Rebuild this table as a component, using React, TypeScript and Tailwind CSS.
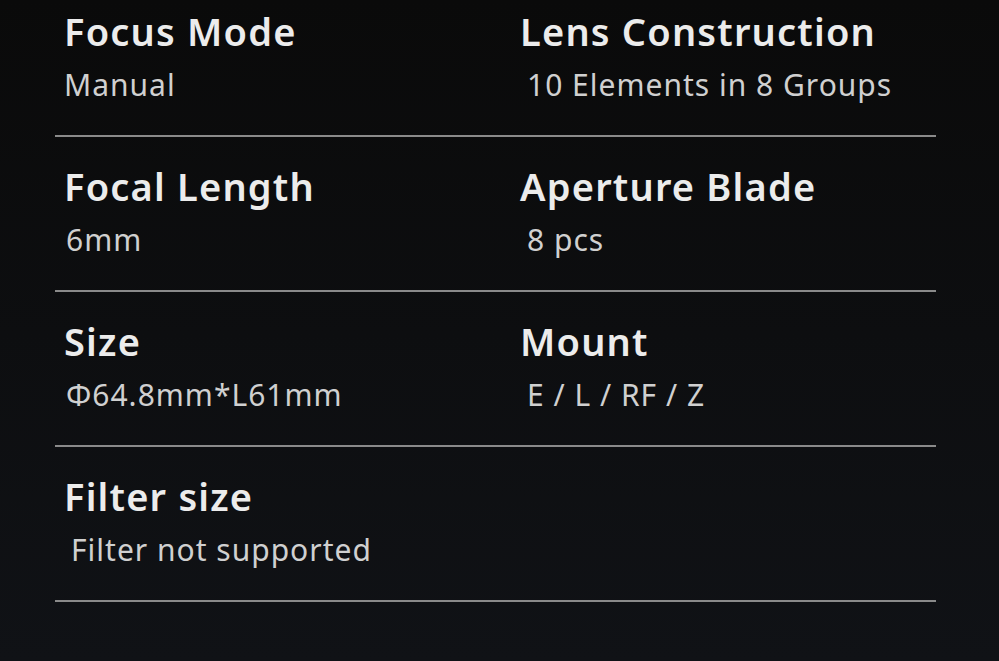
const specs = [
  [
    { label: 'Focus Mode', value: 'Manual', indent: '' },
    { label: 'Lens Construction', value: '10 Elements in 8 Groups', indent: 'pl-[7px]' },
  ],
  [
    { label: 'Focal Length', value: '6mm', indent: 'pl-[2px]' },
    { label: 'Aperture Blade', value: '8 pcs', indent: 'pl-[7px]' },
  ],
  [
    { label: 'Size', value: 'Φ64.8mm*L61mm', indent: 'pl-[2px]' },
    { label: 'Mount', value: 'E / L / RF / Z', indent: 'pl-[7px]' },
  ],
  [{ label: 'Filter size', value: 'Filter not supported', indent: 'pl-[7px]' }],
]

export default function App() {
  return (
    <div
      className="w-[999px] h-[661px] overflow-hidden bg-gradient-to-b from-[#0a0a0a] to-[#101216]"
      style={{ fontFamily: '"Noto Sans", "Open Sans", sans-serif' }}
    >
      <div className="ml-[55px] w-[881px] -mt-[18px]">
        {specs.map((row, i) => (
          <div key={i} className="h-[155px] border-b-2 border-[#8a8a8a] pt-[26px] pl-[9px] grid grid-cols-[456px_1fr]">
            {row.map((item) => (
              <div key={item.label}>
                <div className="text-[38px] leading-[46px] font-semibold text-[#ececec] tracking-[1.2px]">
                  {item.label}
                </div>
                <div className={`mt-[13px] text-[30px] leading-[36px] text-[#d0d0d0] tracking-[1px] ${item.indent}`}>
                  {item.value}
                </div>
              </div>
            ))}
          </div>
        ))}
      </div>
    </div>
  )
}
